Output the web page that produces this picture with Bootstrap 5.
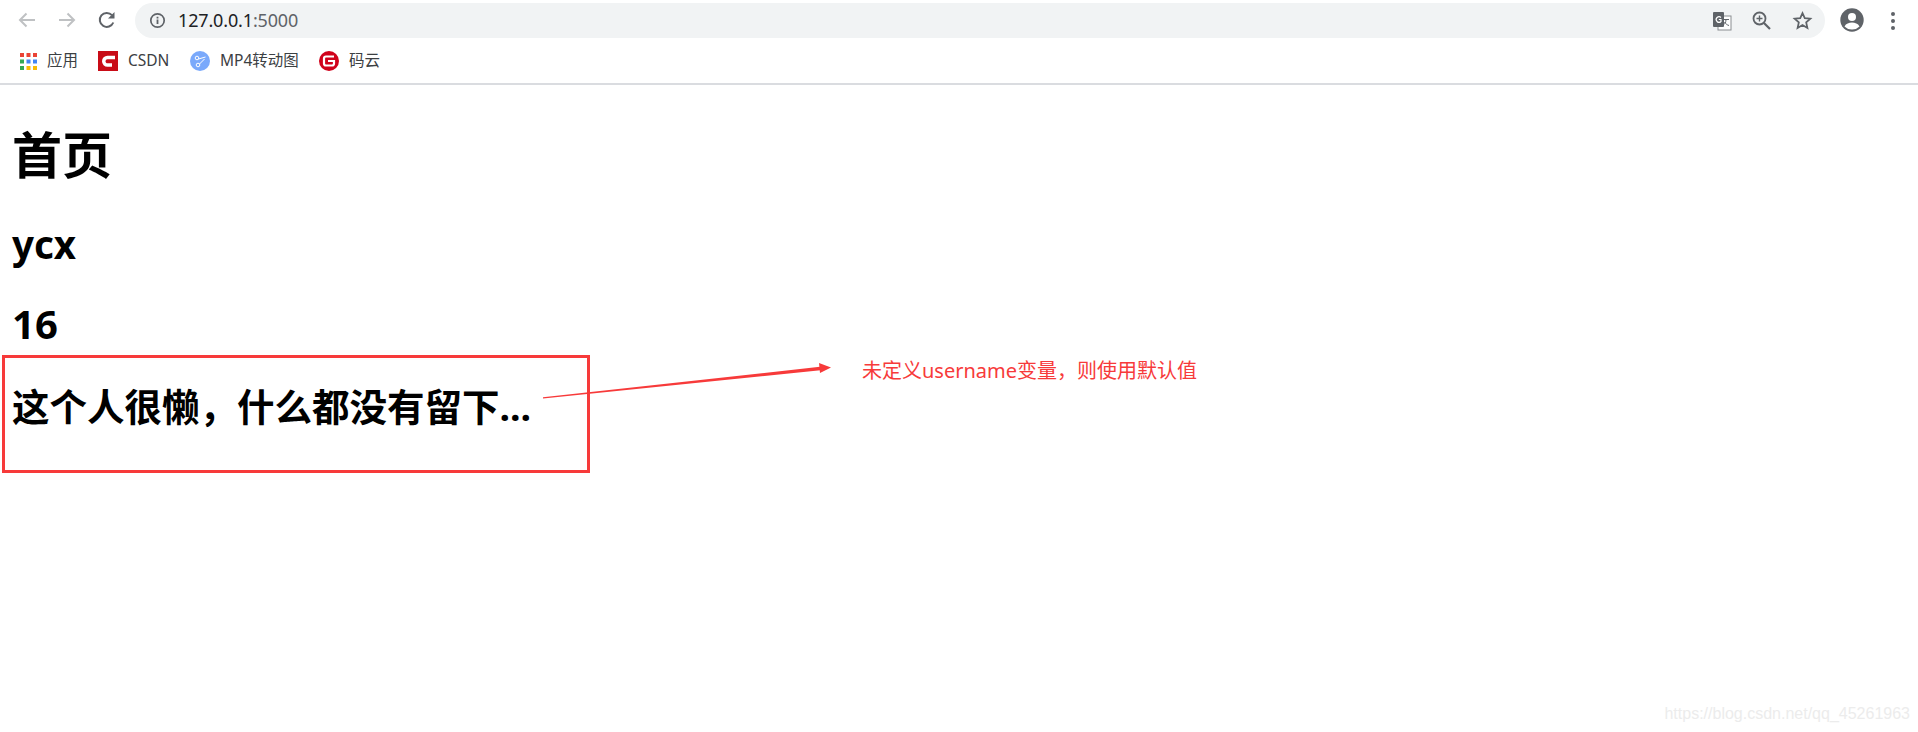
<!doctype html>
<html lang="zh">
<head>
<meta charset="utf-8">
<title>首页</title>
<link href="https://cdn.jsdelivr.net/npm/bootstrap@5.3.0/dist/css/bootstrap.min.css" rel="stylesheet">
<style>
html,body{height:100%}
body{background:#fff;color:#000;font-family:"Noto Sans","Noto Sans CJK SC",sans-serif;overflow:hidden;position:relative}
.chrome-top{height:41px;padding-left:135px;padding-right:0}
.tool-ic{position:absolute;top:8px;width:24px;height:24px}
.omni{width:1690px;height:35px;margin-top:3px;background:#f1f3f4;border-radius:18px;padding-left:43px;font-size:18px;line-height:35px;color:#202124;letter-spacing:-.15px}
.omni span{color:#5f6368}
.marks{padding-left:20px;border-bottom:2px solid #dadce0;height:44px;font-size:15.500px;color:#3c4043}
.mark-item{display:flex;align-items:center;margin-top:-2px;height:40px}
.mark-item svg{margin-right:10px;flex:none}
.mi-1{width:78px}.mi-2{width:92px}.mi-3{width:129px}
.page-h1{font-size:50px;font-weight:700;line-height:54px;margin:43px 0 0 12px}
.page-h2{font-size:37.500px;font-weight:700;line-height:40px;margin:0 0 0 12px}
.latin-a{font-size:38.500px}
.latin-b{font-size:40px}
.g1{margin-top:42px}
.g2{margin-top:40px}
.g3{margin-top:43px}
.red-box{position:absolute;left:2px;top:355px;width:588px;height:118px;border:3px solid #f73a3a}
.note{position:absolute;left:862px;top:356px;font-size:20px;line-height:30px;color:#f73a3a;white-space:nowrap}
.arrow{position:absolute;left:0;top:0;width:1918px;height:732px;pointer-events:none}
.wm{position:absolute;right:8px;top:703px;font-family:"Liberation Sans",sans-serif;font-size:16px;line-height:22px;color:#ececec}
</style>
</head>
<body>
<header>
  <svg class="tool-ic" style="left:15px" viewBox="0 0 24 24"><path d="M20 12H5M11.500 5.500 5 12l6.500 6.500" fill="none" stroke="#bfc1c3" stroke-width="2"/></svg>
  <svg class="tool-ic" style="left:55px" viewBox="0 0 24 24"><path d="M4 12h15M12.500 5.500 19 12l-6.500 6.500" fill="none" stroke="#bfc1c3" stroke-width="2"/></svg>
  <svg class="tool-ic" style="left:95px" viewBox="0 0 24 24"><path d="M18.300 14.500A7 7 0 1 1 17 7.200" fill="none" stroke="#5f6368" stroke-width="2"/><path d="M19.500 4v6.500H13z" fill="#5f6368"/></svg>
  <div class="chrome-top d-flex">
    <div class="omni position-relative">
      <svg class="position-absolute" style="left:14px;top:9px" width="17" height="17" viewBox="0 0 17 17"><circle cx="8.500" cy="8.500" r="6.700" fill="none" stroke="#5f6368" stroke-width="1.700"/><path d="M7.600 7.500h1.800v4.500H7.600zM7.600 4.800h1.800v1.700H7.600z" fill="#5f6368"/></svg>
      127.0.0.1<span>:5000</span>
      <svg class="position-absolute" style="left:1577px;top:8px" width="20" height="20" viewBox="0 0 20 20"><rect x="6" y="5" width="13" height="14" fill="#fff" stroke="#8a8d90"/><rect x="1" y="1" width="11" height="15" rx="1" fill="#5f6368"/><path d="M9 6.500A2.800 2.800 0 1 0 9 10.500V8.500H6.800" fill="none" stroke="#fff" stroke-width="1.200"/><path d="M11 8.500h6M14 8.500c0 3-1.500 5-3.500 6M12.500 11c1 1.500 2.500 3 4.500 3.500" fill="none" stroke="#5f6368" stroke-width="1"/></svg>
      <svg class="position-absolute" style="left:1616px;top:7px" width="21" height="21" viewBox="0 0 21 21"><circle cx="8.500" cy="8.500" r="6" fill="none" stroke="#5f6368" stroke-width="1.800"/><path d="M13 13l6 6" stroke="#5f6368" stroke-width="2.200"/><path d="M8.500 5.500v6M5.500 8.500h6" stroke="#5f6368" stroke-width="1.400"/></svg>
      <svg class="position-absolute" style="left:1657px;top:7px" width="21" height="21" viewBox="0 0 24 24"><path d="M12 3.500l2.600 5.900 6.400.6-4.800 4.200 1.400 6.300L12 17.200l-5.600 3.300 1.400-6.300L3 10l6.400-.6z" fill="none" stroke="#5f6368" stroke-width="2"/></svg>
    </div>
    <svg class="ms-auto" style="position:absolute;left:1840px;top:8px" width="24" height="24" viewBox="0 0 24 24"><circle cx="12" cy="12" r="11.700" fill="#5f6368"/><circle cx="12" cy="9" r="4" fill="#fff"/><path d="M4.500 18.500c1.500-3 4.500-4 7.500-4s6 1 7.500 4A10 10 0 0 1 12 21.500a10 10 0 0 1-7.500-3z" fill="#fff"/></svg>
    <svg style="position:absolute;left:1889px;top:11px" width="8" height="20" viewBox="0 0 8 20"><circle cx="4" cy="3" r="2" fill="#5f6368"/><circle cx="4" cy="10" r="2" fill="#5f6368"/><circle cx="4" cy="17" r="2" fill="#5f6368"/></svg>
  </div>
  <nav class="marks d-flex align-items-center">
    <div class="mark-item mi-1">
      <svg width="17" height="17" viewBox="0 0 17 17"><g fill="#ea4335"><rect width="4" height="4"/><rect x="6.500" width="4" height="4"/><rect x="13" width="4" height="4"/></g><g fill="#34a853"><rect y="6.500" width="4" height="4"/><rect y="13" width="4" height="4"/></g><rect x="6.500" y="6.500" width="4" height="4" fill="#4285f4"/><rect x="13" y="6.500" width="4" height="4" fill="#4285f4"/><rect x="6.500" y="13" width="4" height="4" fill="#fbbc04"/><rect x="13" y="13" width="4" height="4" fill="#fbbc04"/></svg>
      <span>应用</span>
    </div>
    <div class="mark-item mi-2">
      <svg width="20" height="20" viewBox="0 0 20 20"><rect width="20" height="20" fill="#c90c17"/><path d="M17 6.500H9.500a3.500 3.500 0 0 0 0 7.500H14" fill="none" stroke="#fff" stroke-width="3.500"/></svg>
      <span>CSDN</span>
    </div>
    <div class="mark-item mi-3">
      <svg width="20" height="20" viewBox="0 0 20 20"><circle cx="10" cy="10" r="10" fill="#7aa9fb"/><circle cx="7" cy="7" r="1.800" fill="none" stroke="#fff"/><circle cx="8" cy="14" r="1.800" fill="none" stroke="#fff"/><path d="M8.500 8l7-2M9.500 13l5-5" stroke="#fff"/></svg>
      <span>MP4转动图</span>
    </div>
    <div class="mark-item">
      <svg width="20" height="20" viewBox="0 0 20 20"><circle cx="10" cy="10" r="10" fill="#d0021b"/><path d="M15 5.500H7A2 2 0 0 0 5 7.500v5A2 2 0 0 0 7 14.500h6A2 2 0 0 0 15 12.500V10H9" fill="none" stroke="#fff" stroke-width="2.200"/></svg>
      <span>码云</span>
    </div>
  </nav>
</header>
<main>
  <h1 class="page-h1">首页</h1>
  <h2 class="page-h2 latin-a g1">ycx</h2>
  <h2 class="page-h2 latin-b g2">16</h2>
  <h2 class="page-h2 g3">这个人很懒，什么都没有留下...</h2>
</main>
<div class="red-box"></div>
<svg class="arrow" viewBox="0 0 1918 732"><path d="M543 397.300 L820 366.800 L820.500 370.200 L543 398.500z" fill="#f73a3a"/><path d="M831 367.500 L819 363 L820 373z" fill="#f73a3a"/></svg>
<div class="note">未定义username变量，则使用默认值</div>
<div class="wm">https://blog.csdn.net/qq_45261963</div>
<script src="https://cdn.jsdelivr.net/npm/bootstrap@5.3.0/dist/js/bootstrap.bundle.min.js"></script>
</body>
</html>
